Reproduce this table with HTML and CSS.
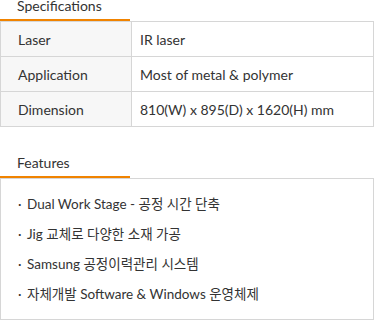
FILE: index.html
```html
<!DOCTYPE html>
<html lang="ko">
<head>
<meta charset="utf-8">
<link rel="stylesheet" href="styles.css">
</head>
<body>
<section class="spec">
  <h2 class="title">Specifications</h2>
  <table class="spec-table">
    <tr><th>Laser</th><td>IR laser</td></tr>
    <tr><th>Application</th><td>Most of metal &amp; polymer</td></tr>
    <tr><th>Dimension</th><td>810(W) x 895(D) x 1620(H) mm</td></tr>
  </table>
</section>
<section class="features">
  <h2 class="title">Features</h2>
  <ul class="feature-list">
    <li>Dual Work Stage - 공정 시간 단축</li>
    <li>Jig 교체로 다양한 소재 가공</li>
    <li>Samsung 공정이력관리 시스템</li>
    <li>자체개발 Software &amp; Windows 운영체제</li>
  </ul>
</section>
</body>
</html>
```
FILE: styles.css
```css
html, body {
  margin: 0;
  padding: 0;
  background: #fff;
}
body {
  width: 374px;
  font-family: Lato, "Noto Sans CJK KR", sans-serif;
  color: #333;
  font-size: 14px;
}
.title {
  margin: 0;
  width: 113px;
  padding: 0 0 6px 17px;
  font-size: 14px;
  font-weight: 400;
  line-height: 14px;
  color: #333;
  border-bottom: 2px solid #f08300;
  position: relative;
  top: -1px;
  margin-bottom: -1px;
}
.spec-table {
  width: 374px;
  border-collapse: collapse;
  border-top: 1px solid #d6d6d6;
}
.spec-table th,
.spec-table td {
  height: 34px;
  padding: 0;
  border: 1px solid #d6d6d6;
  text-align: left;
  font-weight: 400;
  vertical-align: middle;
}
.spec-table th {
  width: 113px;
  padding-left: 17px;
  background: #f7f7f7;
  border-left: 1px solid #d6d6d6;
  border-right: none;
}
.spec-table td {
  padding-left: 8px;
}
.features {
  margin-top: 30px;
}
.feature-list {
  list-style: none;
  margin: 0;
  padding: 10px 0;
  border: 1px solid #d6d6d6;
  border-top: 1px solid #d6d6d6;
  font-size: 13.5px;
}
.feature-list li {
  line-height: 30px;
  padding-left: 17px;
}
.feature-list li::before {
  content: "·";
  display: inline-block;
  width: 9px;
}
```
